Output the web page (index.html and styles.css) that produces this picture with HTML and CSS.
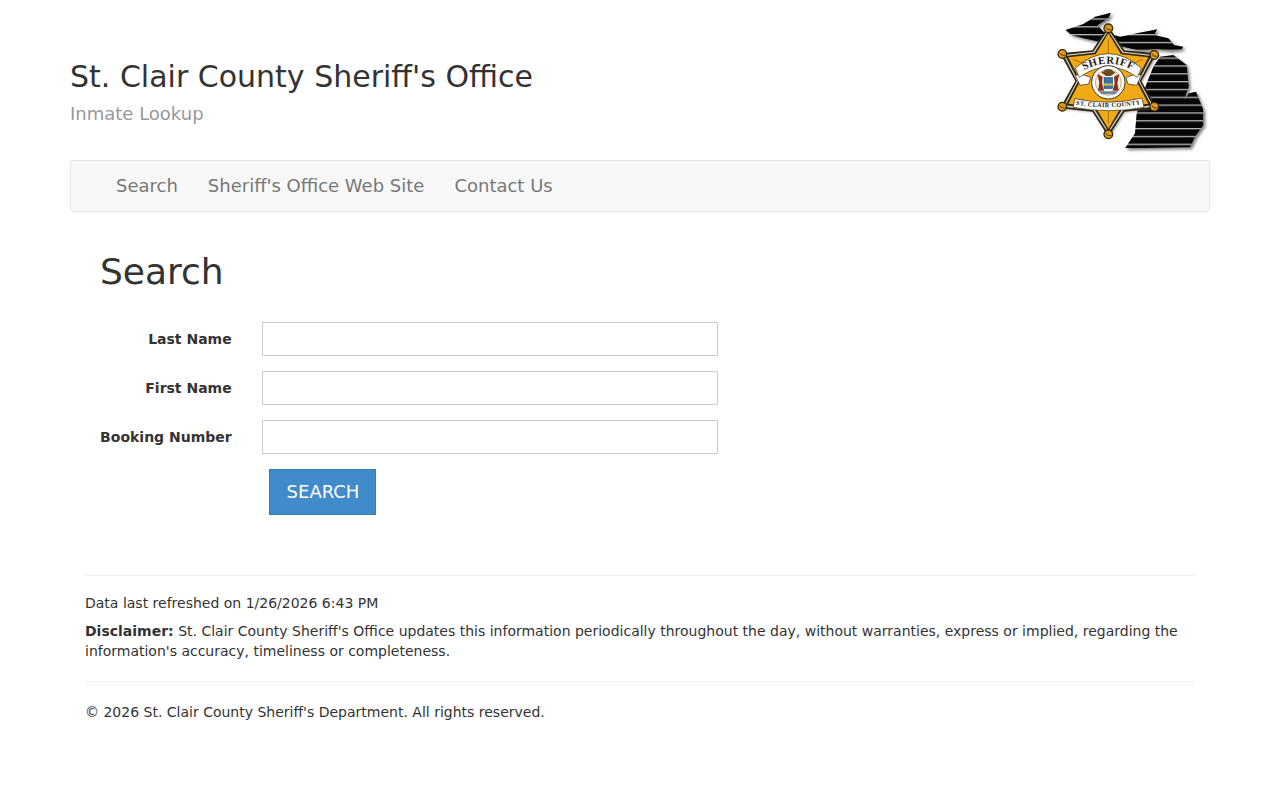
FILE: index.html
```html
<!DOCTYPE html>
<html lang="en">
<head>
<meta charset="utf-8">
<title>Inmate Lookup</title>
<link rel="stylesheet" href="styles.css">
</head>
<body>
<div class="container">
  <header class="page-header">
    <div class="brand">
      <h1 class="brand-title">St. Clair County Sheriff's Office</h1>
      <p class="brand-sub">Inmate Lookup</p>
    </div>
    <svg class="logo" viewBox="0 0 510 480" width="170" height="160" aria-label="Sheriff badge">
      <defs>
        <pattern id="stripes" patternUnits="userSpaceOnUse" width="10" height="23.5" y="8">
          <rect width="10" height="23.5" fill="#050505"/>
          <rect y="0" width="10" height="3" fill="#b5b5b5"/>
          <rect y="3" width="10" height="2" fill="#5a5a5a"/>
        </pattern>
        <filter id="soft" x="-10%" y="-10%" width="120%" height="120%">
          <feGaussianBlur stdDeviation="4"/>
        </filter>
        <clipPath id="mi">
          <path d="M76 90L130 72L165 50L213 38L205 55L172 76L190 95L240 110L290 100L352 88L342 105L385 115L402 135L430 140L425 148L390 152L350 147L300 152L250 140L200 130L130 115L95 105ZM360 170L400 165L440 195L446 260L432 300L447 280L468 275L490 330L490 375L465 410L450 442L255 445L285 400L290 340L320 250L340 200Z"/>
        </clipPath>
        <path id="arc-top" d="M122 216Q205 166 288 216"/>
        <path id="arc-bottom" d="M106 314Q205 330 304 312"/>
      </defs>
      <path d="M84 96L136 78L171 56L219 44L211 61L178 82L196 101L246 116L296 106L358 94L348 111L391 121L408 141L436 146L431 154L396 158L356 153L306 158L256 146L206 136L136 121L101 111ZM366 176L406 171L446 201L452 266L438 306L453 286L474 281L496 336L496 381L471 416L456 448L261 451L291 406L296 346L326 256L346 206Z" fill="#555" filter="url(#soft)" opacity=".75"/>
      <rect x="60" y="20" width="450" height="440" fill="url(#stripes)" clip-path="url(#mi)"/>
      <path d="M205 85L250 156L343 165L298 243L343 320L250 330L205 403L160 330L67 320L112 243L67 162L160 156Z" fill="#555" filter="url(#soft)" transform="translate(5 6)" opacity=".7"/>
      <path d="M205 78L253 151L350 160L304 243L350 325L253 335L205 410L157 335L60 325L106 243L60 160L157 151Z" fill="#2f2716"/>
      <path d="M205 88L250 155L340 165L299 243L340 320L250 331L205 400L160 331L70 320L111 243L70 165L160 155Z" fill="#d8d0b8"/>
      <path d="M205 93L247 158L334 168L295 243L334 316L247 327L205 394L163 327L76 316L115 243L76 168L163 158Z" fill="#2f2716"/>
      <path d="M205 100L243 163L325 172L289 243L325 311L243 322L205 386L167 322L85 311L121 243L85 172L167 163Z" fill="#f2a916"/>
      <path d="M205 118V190M130 190L100 178M280 190L310 178M130 296L100 308M280 296L310 308M205 330V370" fill="none" stroke="#7a5410" stroke-width="2"/>
      <circle cx="205" cy="85" r="13" fill="#e19a12" stroke="#33240a" stroke-width="4"/>
      <circle cx="343" cy="165" r="13" fill="#e19a12" stroke="#33240a" stroke-width="4"/>
      <circle cx="343" cy="320" r="13" fill="#e19a12" stroke="#33240a" stroke-width="4"/>
      <circle cx="205" cy="403" r="13" fill="#e19a12" stroke="#33240a" stroke-width="4"/>
      <circle cx="67" cy="320" r="13" fill="#e19a12" stroke="#33240a" stroke-width="4"/>
      <circle cx="67" cy="162" r="13" fill="#e19a12" stroke="#33240a" stroke-width="4"/>
      <path d="M198 82A12 12 0 0 0 214 88M336 162A12 12 0 0 0 352 168M336 317A12 12 0 0 0 352 323M198 400A12 12 0 0 0 214 406M60 317A12 12 0 0 0 76 323M60 159A12 12 0 0 0 76 165" fill="none" stroke="#4a3208" stroke-width="3"/>
      <path d="M106 226L122 222L152 232L146 252L120 256ZM304 226L288 222L258 232L264 252L290 256Z" fill="#fff" stroke="#2f2716" stroke-width="2"/>
      <path d="M106 204Q205 118 304 204L292 232Q205 170 118 232Z" fill="#fff" stroke="#2f2716" stroke-width="2"/>
      <path d="M104 296Q205 318 306 294L312 322Q205 342 100 322Z" fill="#fff" stroke="#2f2716" stroke-width="2"/>
      <circle cx="205" cy="247" r="50" fill="#fff" stroke="#3a3020" stroke-width="3"/>
      <circle cx="205" cy="247" r="39" fill="#f4efe2" stroke="#a3893f" stroke-width="2"/>
      <path d="M184 218L198 208L212 208L226 218L212 228L198 228Z" fill="#6e4a22"/>
      <path d="M172 222L188 230L186 250L192 272L174 272L178 248ZM238 222L222 230L224 250L218 272L236 272L232 248Z" fill="#8c2f1c"/>
      <rect x="192" y="232" width="26" height="34" fill="#2f78b4" stroke="#222"/>
      <rect x="192" y="250" width="26" height="7" fill="#d8b63a"/>
      <path d="M176 274H234L226 282H184Z" fill="#6d84a0"/>
      <text class="logo-top"><textPath href="#arc-top" startOffset="50%" text-anchor="middle">SHERIFF</textPath></text>
      <text class="logo-bottom"><textPath href="#arc-bottom" startOffset="50%" text-anchor="middle">ST. CLAIR COUNTY</textPath></text>
    </svg>
  </header>

  <nav class="navbar">
    <a class="nav-link" href="#">Search</a>
    <a class="nav-link" href="#">Sheriff's Office Web Site</a>
    <a class="nav-link" href="#">Contact Us</a>
  </nav>

  <main class="content">
    <h2 class="content-title">Search</h2>
    <form class="search-form">
      <div class="form-row">
        <label class="form-label" for="last">Last Name</label>
        <input class="form-input" id="last" type="text">
      </div>
      <div class="form-row">
        <label class="form-label" for="first">First Name</label>
        <input class="form-input" id="first" type="text">
      </div>
      <div class="form-row">
        <label class="form-label" for="booking">Booking Number</label>
        <input class="form-input" id="booking" type="text">
      </div>
      <button class="btn-search" type="button">SEARCH</button>
    </form>
  </main>

  <footer class="page-footer">
    <hr class="rule">
    <p class="refreshed">Data last refreshed on 1/26/2026 6:43 PM</p>
    <p class="disclaimer"><strong>Disclaimer:</strong> St. Clair County Sheriff's Office updates this information periodically throughout the day, without warranties, express or implied, regarding the information's accuracy, timeliness or completeness.</p>
    <hr class="rule rule-second">
    <p class="copyright">© 2026 St. Clair County Sheriff's Department. All rights reserved.</p>
  </footer>
</div>
</body>
</html>
```

FILE: styles.css
```css
* {
  box-sizing: border-box;
}

html, body {
  margin: 0;
  padding: 0;
  background: #fff;
}

body {
  font-family: "DejaVu Sans", sans-serif;
  font-size: 14px;
  line-height: 20px;
  color: #333;
}

.container {
  width: 1140px;
  margin: 0 auto;
}

.page-header {
  display: flex;
  justify-content: space-between;
  align-items: flex-start;
  height: 160px;
}

.brand {
  padding-top: 59px;
}

.brand-title {
  margin: 0;
  font-size: 30px;
  font-weight: 400;
  line-height: 36px;
  color: #333;
}

.brand-sub {
  margin: 9px 0 0;
  font-size: 18px;
  line-height: 20px;
  color: #999;
}

.logo {
  display: block;
}

.logo-top {
  font-family: "Liberation Serif", serif;
  font-size: 32px;
  font-weight: 700;
  letter-spacing: 2px;
  fill: #1d1a14;
}

.logo-bottom {
  font-family: "Liberation Serif", serif;
  font-size: 19px;
  font-weight: 700;
  letter-spacing: 1px;
  fill: #1d1a14;
}

.navbar {
  display: flex;
  gap: 30px;
  height: 52px;
  padding: 0 45px;
  align-items: center;
  background: #f8f8f8;
  border: 1px solid #e7e7e7;
  border-radius: 4px;
}

.nav-link {
  font-size: 18px;
  line-height: 20px;
  color: #777;
  text-decoration: none;
}

.content {
  padding: 0 30px;
}

.content-title {
  margin: 40px 0 0;
  font-size: 36px;
  font-weight: 400;
  line-height: 40px;
  color: #333;
}

.search-form {
  margin-top: 30px;
  display: flex;
  flex-direction: column;
  align-items: flex-start;
}

.form-row {
  display: flex;
  align-items: center;
  gap: 30.3px;
  margin-bottom: 15px;
}

.form-label {
  width: 131.7px;
  text-align: right;
  font-weight: 700;
  color: #333;
  white-space: nowrap;
}

.form-input {
  display: block;
  width: 456px;
  height: 34px;
  border: 1px solid #ccc;
  background: #fff;
  padding: 6px 12px;
}

.btn-search {
  margin-left: 169px;
  width: 107px;
  height: 46px;
  padding: 0 0 2px 1px;
  font-family: "DejaVu Sans", sans-serif;
  font-size: 18px;
  color: #fff;
  background: #428bca;
  border: 1px solid #357ebd;
}

.page-footer {
  margin-top: 60px;
  padding: 0 15px;
}

.rule {
  margin: 0;
  border: 0;
  border-top: 1px solid #eee;
}

.refreshed {
  margin: 17px 0 0;
}

.disclaimer {
  margin: 8px 0 0;
}

.rule-second {
  margin-top: 20px;
}

.copyright {
  margin: 20px 0 0;
}
```
